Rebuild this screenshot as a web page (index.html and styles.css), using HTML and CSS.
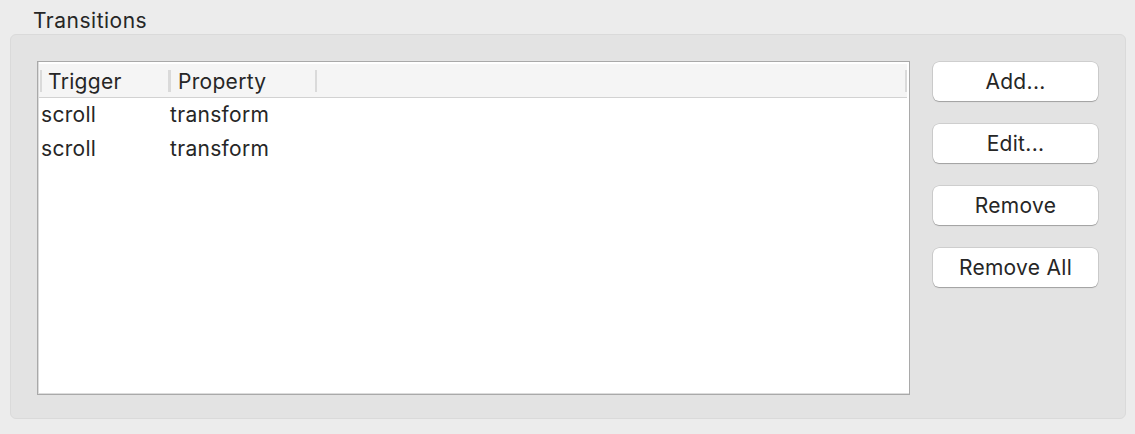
FILE: index.html
```html
<!DOCTYPE html>
<html lang="en">
<head>
  <meta charset="UTF-8">
  <title>Transitions</title>
  <link rel="stylesheet" href="styles.css">
</head>
<body>

  <div class="panel-title">Transitions</div>

  <div class="group-box">
    <div class="table">
      <div class="table-header">
        <div class="col col-trigger">Trigger</div>
        <div class="col col-property">Property</div>
        <div class="col col-rest"></div>
      </div>
      <div class="table-body">
        <div class="row">
          <div class="cell cell-trigger">scroll</div>
          <div class="cell">transform</div>
        </div>
        <div class="row">
          <div class="cell cell-trigger">scroll</div>
          <div class="cell">transform</div>
        </div>
      </div>
    </div>

    <div class="buttons">
      <button>Add...</button>
      <button>Edit...</button>
      <button>Remove</button>
      <button>Remove All</button>
    </div>
  </div>

</body>
</html>
```

FILE: styles.css
```css
body {
  margin: 0;
  background: #ececec;
  font-family: Inter, "Liberation Sans", sans-serif;
  font-size: 21px;
  letter-spacing: 0.3px;
  color: #262626;
}
.panel-title {
  height: 34px;
  line-height: 41px;
  padding-left: 33px;
  letter-spacing: 0.5px;
}
.group-box {
  display: flex;
  margin-left: 10px;
  width: 1116px;
  height: 385px;
  box-sizing: border-box;
  padding: 26px 27px 0 26px;
  background: #e3e3e3;
  border: 1px solid #dadada;
  border-radius: 6px;
}
.table {
  width: 873px;
  height: 334px;
  box-sizing: border-box;
  background: #fff;
  border: 1px solid #a9a9a9;
  box-shadow: inset 1px -1px 0 #dcdcdc;
  padding: 2px 2px 2px 1px;
}
.table-header {
  display: flex;
  align-items: center;
  height: 33px;
  background: #f5f5f5;
  border-bottom: 1px solid #d2d2d2;
  padding-left: 1px;
}
.col {
  height: 22px;
  line-height: 24px;
  border-left: 2px solid #dadada;
}
.col-trigger {
  width: 120px;
  padding-left: 6px;
}
.col-property {
  width: 137px;
  padding-left: 7px;
  border-left-width: 3px;
}
.col-rest {
  flex: 1;
  border-right: 2px solid #dadada;
}
.row {
  display: flex;
  height: 34px;
  line-height: 33px;
}
.cell {
  padding-left: 2px;
}
.cell-trigger {
  width: 127px;
}
.buttons {
  display: flex;
  flex-direction: column;
  gap: 23px;
  margin-left: 23px;
  padding-top: 1px;
}
button {
  width: 165px;
  height: 39px;
  padding: 0;
  font-family: inherit;
  font-size: 21px;
  letter-spacing: 0.3px;
  line-height: 36px;
  color: #262626;
  background: #fff;
  border: none;
  border-radius: 6px;
  box-shadow: 0 0 0 0.5px rgba(0,0,0,0.18), 0 1px 1px rgba(0,0,0,0.22);
}
```
